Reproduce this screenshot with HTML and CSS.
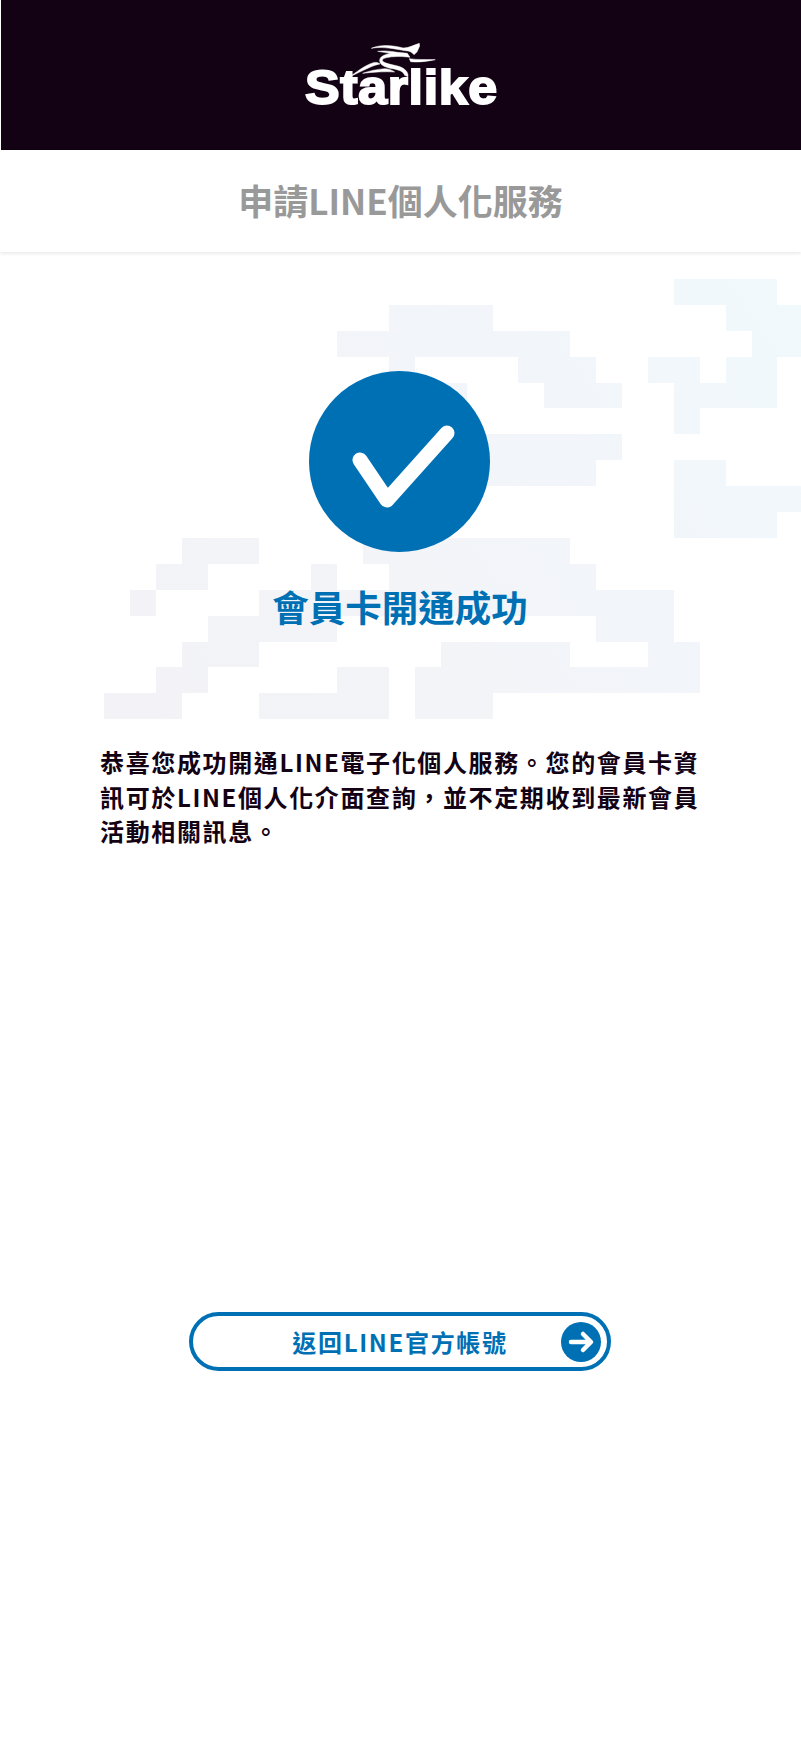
FILE: index.html
```html
<!DOCTYPE html>
<html lang="zh-Hant">

<head>
    <meta charset="UTF-8">
    <meta name="viewport" content="width=device-width, initial-scale=1.0">
    <title>申請LINE個人化服務</title>
    <link rel="stylesheet" href="styles.css">
</head>

<body>
    <header class="brand-bar">
        <div class="logo">
            <svg class="logo-runner" viewBox="290 60 280 120" aria-hidden="true">
                <path d="M366 85C395 72 430 76 462 84C478 84 492 76 510 70L511 78L503 96L494 104C488 96 480 92 468 92C440 88 400 78 366 85Z" />
                <path d="M385 94C410 90 440 96 462 100L470 108C440 104 410 98 385 94Z" />
                <path d="M474 100L482 112C460 108 412 108 400 118C394 128 420 132 445 138C466 144 478 156 476 170L466 166C464 156 452 150 430 146C405 142 386 132 392 116C400 100 440 96 474 100Z" />
                <path d="M480 116C505 120 530 118 558 119C534 124 505 128 484 125Z" />
                <path d="M298 172C320 158 345 136 372 128C382 126 388 128 392 132C370 136 345 150 298 172Z" />
                <path d="M340 160C360 152 385 148 405 146C418 146 428 150 436 156C410 154 375 156 340 160Z" />
            </svg>
            <span class="logo-text">Starlike</span>
        </div>
    </header>

    <div class="title-bar">
        <h1>申請LINE個人化服務</h1>
    </div>

    <main class="result">
        <svg class="pixel-bg" viewBox="0 0 26.92 17" aria-hidden="true">
            <defs>
                <linearGradient id="pixelFade" gradientUnits="userSpaceOnUse" x1="2" y1="17" x2="26" y2="0">
                    <stop offset="0" stop-color="#f3f3f7" />
                    <stop offset="0.6" stop-color="#f2f5f9" />
                    <stop offset="1" stop-color="#f1f9fd" />
                </linearGradient>
            </defs>
            <path fill="url(#pixelFade)" shape-rendering="crispEdges" d="
                M22 0h4v1h-4z
                M24 1h3v1h-3z M11 1h4v1h-4z
                M25 2h2v1h-2z M9 2h9v1h-9z
                M21 3h2v1h-2z M24 3h2v1h-2z M11 3h1v1h-1z M16 3h3v1h-3z
                M22 4h4v1h-4z M11 4h3v1h-3z M17 4h3v1h-3z
                M22 5h1v1h-1z
                M14 6h6v1h-6z
                M22 7h2v1h-2z M14 7h5v1h-5z
                M22 8h5v1h-5z
                M22 9h4v1h-4z
                M3 10h3v1h-3z M10 10h8v1h-8z
                M2 11h2v1h-2z M8 11h1v1h-1z M11 11h8v1h-8z
                M1 12h1v1h-1z M6 12h16v1h-16z
                M4 13h5v1h-5z M19 13h3v1h-3z
                M3 14h3v1h-3z M13 14h5v1h-5z M21 14h2v1h-2z
                M2 15h2v1h-2z M9 15h2v1h-2z M12 15h11v1h-11z
                M0 16h3v1h-3z M6 16h5v1h-5z M12 16h3v1h-3z" />
        </svg>

        <svg class="check-badge" viewBox="0 0 181 181" aria-hidden="true">
            <circle cx="90.5" cy="90.5" r="90.5" fill="#0070b5" />
            <path d="M51 89L78 129L138 62" fill="none" stroke="#fff" stroke-width="15" stroke-linecap="round" stroke-linejoin="round" />
        </svg>

        <h2 class="result-title">會員卡開通成功</h2>

        <p class="result-text">恭喜您成功開通LINE電子化個人服務。您的會員卡資訊可於LINE個人化介面查詢，並不定期收到最新會員活動相關訊息。</p>

        <a class="back-btn" href="#">
            <span>返回LINE官方帳號</span>
            <svg class="back-arrow" viewBox="0 0 40 40" aria-hidden="true">
                <circle cx="20" cy="20" r="20" fill="#0070b5" />
                <path d="M10 20H29.500M22 12L30 20L22 28" fill="none" stroke="#fff" stroke-width="4.500" stroke-linecap="round" stroke-linejoin="round" />
            </svg>
        </a>
    </main>
</body>

</html>
```

FILE: styles.css
```css
html {
    height: 100%;
}

body {
    margin: 0;
    min-height: 1751px;
    background-color: white;
    font-family: "Noto Sans CJK TC", "Noto Sans", sans-serif;
    overflow-x: hidden;
}

.brand-bar {
    height: 150px;
    margin-left: 1px;
    background-color: #130114;
    display: flex;
    justify-content: center;
    padding-top: 40px;
    box-sizing: border-box;
}

.logo {
    position: relative;
    width: 192px;
    height: 68px;
    margin-right: 1px;
}

.logo-runner {
    position: absolute;
    left: 41px;
    top: 0;
    width: 93.3px;
    height: 40px;
    fill: white;
    stroke: white;
    stroke-width: 1.5;
}

.logo-text {
    position: absolute;
    left: 0;
    bottom: -4px;
    font-family: "Liberation Sans", Arial, sans-serif;
    font-size: 49px;
    line-height: 1;
    font-weight: bold;
    letter-spacing: 0.6px;
    color: white;
    -webkit-text-stroke: 2px white;
    transform: scaleX(1.06);
    transform-origin: left center;
}

.title-bar {
    height: 102px;
    display: flex;
    align-items: center;
    justify-content: center;
    padding-bottom: 4px;
    box-sizing: border-box;
    background-color: white;
    box-shadow: 0 2px 3px rgba(0, 0, 0, 0.08);
    position: relative;
    z-index: 1;
}

.title-bar h1 {
    margin: 0;
    font-size: 35px;
    line-height: 1;
    font-weight: bold;
    color: #999999;
}

.result {
    position: relative;
    display: flex;
    flex-direction: column;
    align-items: center;
    padding-top: 119px;
    padding-right: 1px;
}

.pixel-bg {
    position: absolute;
    left: 103.7px;
    top: 27px;
    width: 697.3px;
    height: 440.3px;
}

.check-badge {
    position: relative;
    width: 181px;
    height: 181px;
    margin-right: 1px;
}

.result-title {
    position: relative;
    margin: 28px 0 0;
    font-size: 36.500px;
    line-height: 54px;
    font-weight: bold;
    color: #0070b5;
}

.result-text {
    position: relative;
    width: 602px;
    margin: 111px 0 0 2px;
    font-size: 24px;
    line-height: 34.600px;
    font-weight: bold;
    letter-spacing: 1.630px;
    color: #130114;
}

.back-btn {
    display: flex;
    align-items: center;
    justify-content: center;
    position: relative;
    width: 422px;
    height: 59px;
    box-sizing: border-box;
    margin-top: 463px;
    border: 4px solid #0070b5;
    border-radius: 30px;
    font-size: 24px;
    font-weight: bold;
    letter-spacing: 1.700px;
    color: #0070b5;
    text-decoration: none;
}

.back-arrow {
    position: absolute;
    right: 6px;
    top: 6px;
    width: 40px;
    height: 40px;
}
```
